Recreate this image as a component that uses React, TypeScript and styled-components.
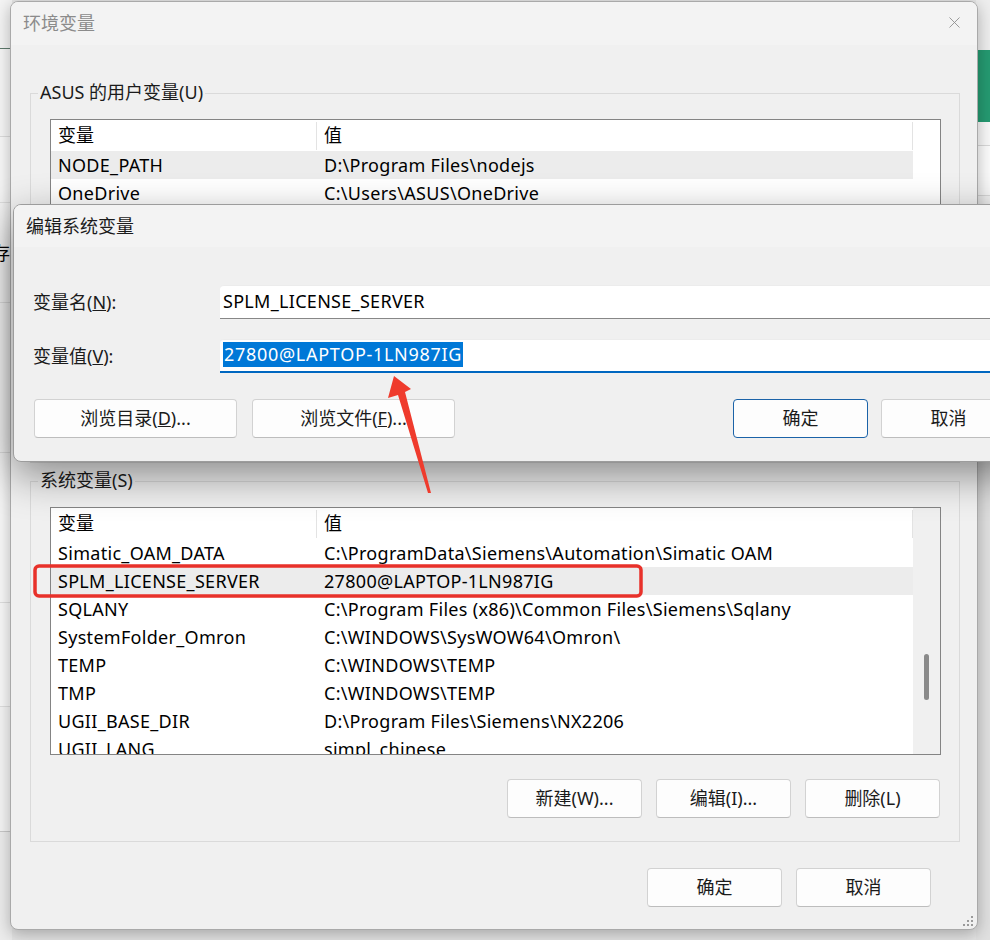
import styled, { createGlobalStyle } from "styled-components";
import { X } from "lucide-react";

const GlobalStyle = createGlobalStyle`
  html, body { margin: 0; padding: 0; }
  body {
    width: 990px;
    height: 940px;
    overflow: hidden;
    background: #e6e6e6;
    font-family: "Noto Sans", "Noto Sans CJK SC", sans-serif;
    color: #000;
  }
`;

const Desktop = styled.div`
  position: relative;
  width: 990px;
  height: 940px;
  overflow: hidden;
  background: #e4e4e4;
`;

// 뒤쪽 창 (왼쪽, 오른쪽 가장자리)
const BackPane = styled.div<{ $left: number; $w: number }>`
  position: absolute;
  top: 0;
  left: ${(p) => p.$left}px;
  width: ${(p) => p.$w}px;
  height: 940px;
  display: flex;
  flex-direction: column;
  overflow: hidden;
`;

const BackSeg = styled.div<{ $h: number; $bg: string; $line?: string }>`
  flex: none;
  height: ${(p) => p.$h}px;
  background: ${(p) => p.$bg};
  border-bottom: 1px solid ${(p) => p.$line || "transparent"};
  box-sizing: border-box;
  font-size: 18px;
  line-height: ${(p) => p.$h}px;
  white-space: nowrap;
  text-indent: -8px;
`;

const MainWindow = styled.div`
  position: absolute;
  left: 10px;
  top: 1px;
  width: 968px;
  height: 929px;
  box-sizing: border-box;
  background: #f0f0f0;
  border: 1px solid #a9a9a9;
  border-radius: 8px;
  box-shadow: 0 4px 16px rgba(0, 0, 0, 0.28);
  display: flex;
  flex-direction: column;
  overflow: hidden;
`;

const TitleBar = styled.div<{ $h: number; $dim?: boolean }>`
  flex: none;
  height: ${(p) => p.$h}px;
  box-sizing: border-box;
  background: #f3f3f3;
  display: flex;
  align-items: center;
  justify-content: space-between;
  padding: 0 12px 3px 12px;
  font-size: 18px;
  color: ${(p) => (p.$dim ? "#8b8b8b" : "#1b1b1b")};
`;

const CloseBtn = styled.span`
  display: flex;
  color: #8c8c8c;
  margin-right: 1px;
`;

const MainBody = styled.div`
  flex: 1;
  display: flex;
  flex-direction: column;
  padding: 0 17px 0 19px;
`;

const Group = styled.div<{ $top: number; $h: number }>`
  position: relative;
  flex: none;
  margin-top: ${(p) => p.$top}px;
  height: ${(p) => p.$h}px;
  box-sizing: border-box;
  border: 1px solid #dadada;
  padding: 25px 18px 0 19px;
  display: flex;
  flex-direction: column;
`;

const Legend = styled.span`
  position: absolute;
  top: -14px;
  left: 7px;
  padding: 0 2px;
  background: #f0f0f0;
  font-size: 18px;
  line-height: 24px;
  color: #1b1b1b;
`;

const List = styled.div<{ $h: number; $track: string }>`
  flex: none;
  height: ${(p) => p.$h}px;
  box-sizing: border-box;
  border: 1px solid #848484;
  background: #fff;
  overflow: hidden;
  display: grid;
  grid-template-columns: 1fr 27px;
  > :last-child {
    background: ${(p) => p.$track};
  }
`;

const Rows = styled.div`
  display: flex;
  flex-direction: column;
  overflow: hidden;
`;

const Header = styled.div`
  flex: none;
  height: 31px;
  display: grid;
  grid-template-columns: 266px 1fr;
  align-items: center;
  font-size: 18px;
`;

const HeadCell = styled.div`
  height: 28px;
  line-height: 27px;
  padding-left: 7px;
  border-right: 1px solid #e3e3e3;
`;

const Row = styled.div<{ $selected?: boolean }>`
  flex: none;
  height: 28px;
  display: grid;
  grid-template-columns: 266px 1fr;
  align-items: center;
  background: ${(p) => (p.$selected ? "#ececec" : "transparent")};
  font-size: 18px;
  letter-spacing: 0.3px;
  white-space: nowrap;
`;

const Cell = styled.div`
  padding: 0 0 1px 7px;
  overflow: hidden;
`;

const Track = styled.div`
  display: flex;
  flex-direction: column;
`;

const Thumb = styled.div`
  margin: 146px 0 0 11px;
  width: 5px;
  height: 46px;
  border-radius: 3px;
  background: #8a8a8a;
`;

const ButtonRow = styled.div<{ $top: number; $gap: number; $right?: number }>`
  flex: none;
  display: flex;
  justify-content: flex-end;
  gap: ${(p) => p.$gap}px;
  margin-top: ${(p) => p.$top}px;
  margin-right: ${(p) => p.$right || 0}px;
`;

const Button = styled.button<{ $w: number; $primary?: boolean }>`
  width: ${(p) => p.$w}px;
  height: 39px;
  box-sizing: border-box;
  background: #fdfdfd;
  border: 1px solid ${(p) => (p.$primary ? "#1b63a8" : "#d2d2d2")};
  border-bottom-color: ${(p) => (p.$primary ? "#1b63a8" : "#bdbdbd")};
  border-radius: 4px;
  font-family: inherit;
  font-size: 18px;
  color: #1b1b1b;
  padding: 0 0 3px;
`;

const Grip = styled.svg`
  position: absolute;
  right: 3px;
  bottom: 2px;
`;

const Dialog = styled.div`
  position: absolute;
  left: 13px;
  top: 204px;
  width: 1024px;
  height: 258px;
  box-sizing: border-box;
  background: #f0f0f0;
  border: 1px solid #9c9c9c;
  border-radius: 8px;
  box-shadow: 0 14px 40px rgba(0, 0, 0, 0.42);
  display: flex;
  flex-direction: column;
  overflow: hidden;
`;

const DialogBody = styled.div`
  display: flex;
  flex-direction: column;
  padding: 0 20px 0 19px;
`;

const Field = styled.div<{ $top: number }>`
  display: grid;
  grid-template-columns: 187px 1fr;
  align-items: center;
  margin-top: ${(p) => p.$top}px;
  font-size: 18px;
  color: #1b1b1b;
  > span {
    padding-bottom: 3px;
  }
`;

const Input = styled.div<{ $focus?: boolean }>`
  height: 34px;
  box-sizing: border-box;
  display: flex;
  align-items: center;
  padding: 0 0 2px 3px;
  background: #fff;
  border-radius: 4px 4px 0 0;
  border-top: 1px solid #ececec;
  border-bottom: ${(p) => (p.$focus ? "2px solid #0067c0" : "1px solid #878787")};
  font-size: 18px;
  letter-spacing: 0.3px;
  color: #000;
  white-space: nowrap;
`;

const Selected = styled.span`
  background: #0078d7;
  color: #fff;
  line-height: 25px;
  padding: 0 1px;
  letter-spacing: 0.7px;
`;

const DialogButtons = styled.div`
  display: flex;
  justify-content: space-between;
  margin-top: 26px;
  padding-left: 1px;
`;

const BtnGroup = styled.div<{ $gap: number }>`
  display: flex;
  gap: ${(p) => p.$gap}px;
`;

const Overlay = styled.svg`
  position: absolute;
  left: 0;
  top: 0;
  pointer-events: none;
`;

const userRows: [string, string][] = [
  ["NODE_PATH", "D:\\Program Files\\nodejs"],
  ["OneDrive", "C:\\Users\\ASUS\\OneDrive"],
  ["OneDriveConsumer", "C:\\Users\\ASUS\\OneDrive"],
  ["Path", "C:\\Users\\ASUS\\AppData\\Local\\Microsoft\\WindowsApps;"],
  ["TEMP", "C:\\Users\\ASUS\\AppData\\Local\\Temp"],
  ["TMP", "C:\\Users\\ASUS\\AppData\\Local\\Temp"],
  ["UGII_LANG", "simpl_chinese"],
  ["UGII_TMP_DIR", "C:\\Users\\ASUS\\AppData\\Local\\Temp"],
];

const sysRows: [string, string][] = [
  ["Simatic_OAM_DATA", "C:\\ProgramData\\Siemens\\Automation\\Simatic OAM"],
  ["SPLM_LICENSE_SERVER", "27800@LAPTOP-1LN987IG"],
  ["SQLANY", "C:\\Program Files (x86)\\Common Files\\Siemens\\Sqlany"],
  ["SystemFolder_Omron", "C:\\WINDOWS\\SysWOW64\\Omron\\"],
  ["TEMP", "C:\\WINDOWS\\TEMP"],
  ["TMP", "C:\\WINDOWS\\TEMP"],
  ["UGII_BASE_DIR", "D:\\Program Files\\Siemens\\NX2206"],
  ["UGII_LANG", "simpl_chinese"],
  ["USERNAME", "SYSTEM"],
];

const leftSegs: [number, string, string, string?][] = [
  [49, "#f4f4f4", "#5e7a6c"],
  [88, "#f6f6f6", "#dcdcdc"],
  [66, "#f8f8f8", "#e2e2e2"],
  [100, "#f8f8f8", "#e0e0e0", "存"],
  [150, "#f8f8f8", "#e0e0e0"],
  [150, "#f8f8f8", "#dedede"],
  [104, "#f8f8f8", "#dedede"],
  [125, "#f4f4f4", "#c8c8c8"],
  [108, "#ececec", "transparent"],
];

const rightSegs: [number, string, string][] = [
  [50, "#eeeeee", "transparent"],
  [72, "#259a71", "transparent"],
  [24, "#f8f8f8", "#d8d8d8"],
  [50, "#fbfbfb", "#dcdcdc"],
  [266, "#f6f6f6", "transparent"],
  [478, "#e0e0e0", "transparent"],
];

function VarList({ rows, h, selected, track, thumb }: { rows: [string, string][]; h: number; selected: number; track: string; thumb?: boolean }) {
  return (
    <List $h={h} $track={track}>
      <Rows>
        <Header>
          <HeadCell>变量</HeadCell>
          <HeadCell>值</HeadCell>
        </Header>
        {rows.map(([k, v], i) => (
          <Row key={k + i} $selected={i === selected}>
            <Cell>{k}</Cell>
            <Cell>{v}</Cell>
          </Row>
        ))}
      </Rows>
      <Track>{thumb && <Thumb />}</Track>
    </List>
  );
}

function App() {
  return (
    <>
      <GlobalStyle />
      <Desktop>
        <BackPane $left={0} $w={12}>
          {leftSegs.map(([h, bg, line, t], i) => (
            <BackSeg key={i} $h={h} $bg={bg} $line={line}>{t}</BackSeg>
          ))}
        </BackPane>
        <BackPane $left={976} $w={14}>
          {rightSegs.map(([h, bg, line], i) => (
            <BackSeg key={i} $h={h} $bg={bg} $line={line} />
          ))}
        </BackPane>

        <MainWindow>
          <TitleBar $h={43} $dim>
            <span>环境变量</span>
            <CloseBtn>
              <X size={19} strokeWidth={1.1} />
            </CloseBtn>
          </TitleBar>
          <MainBody>
            <Group $top={48} $h={370}>
              <Legend>ASUS 的用户变量(U)</Legend>
              <VarList rows={userRows} h={300} selected={0} track="#fff" />
            </Group>
            <Group $top={18} $h={361}>
              <Legend>系统变量(S)</Legend>
              <VarList rows={sysRows} h={248} selected={1} track="#f0f0f0" thumb />
              <ButtonRow $top={24} $gap={14} $right={1}>
                <Button $w={135}>新建(W)...</Button>
                <Button $w={135}>编辑(I)...</Button>
                <Button $w={135}>删除(L)</Button>
              </ButtonRow>
            </Group>
            <ButtonRow $top={26} $gap={14} $right={29}>
              <Button $w={135}>确定</Button>
              <Button $w={135}>取消</Button>
            </ButtonRow>
          </MainBody>
          <Grip width="12" height="12" viewBox="0 0 12 12">
            {[
              [10, 2],
              [10, 6],
              [6, 6],
              [10, 10],
              [6, 10],
              [2, 10],
            ].map(([x, y], i) => (
              <rect key={i} x={x - 1} y={y - 1} width="2" height="2" fill="#9a9a9a" />
            ))}
          </Grip>
        </MainWindow>

        <Dialog>
          <TitleBar $h={42}>
            <span>编辑系统变量</span>
          </TitleBar>
          <DialogBody>
            <Field $top={38}>
              <span>
                变量名(<u>N</u>):
              </span>
              <Input>SPLM_LICENSE_SERVER</Input>
            </Field>
            <Field $top={20}>
              <span>
                变量值(<u>V</u>):
              </span>
              <Input $focus>
                <Selected>27800@LAPTOP-1LN987IG</Selected>
              </Input>
            </Field>
            <DialogButtons>
              <BtnGroup $gap={15}>
                <Button $w={203}>
                  浏览目录(<u>D</u>)...
                </Button>
                <Button $w={203}>
                  浏览文件(<u>F</u>)...
                </Button>
              </BtnGroup>
              <BtnGroup $gap={13}>
                <Button $w={135} $primary>确定</Button>
                <Button $w={135}>取消</Button>
              </BtnGroup>
            </DialogButtons>
          </DialogBody>
        </Dialog>

        <Overlay width="990" height="940" viewBox="0 0 990 940">
          <rect x="35" y="566" width="606" height="30" rx="4" fill="none" stroke="#e8312a" strokeWidth="3.5" />
          <polygon
            points="394,376 411,389 405,392 431,493 428,493 398,395 388,398"
            fill="#ef3b2d"
          />
        </Overlay>
      </Desktop>
    </>
  );
}

export default App;
